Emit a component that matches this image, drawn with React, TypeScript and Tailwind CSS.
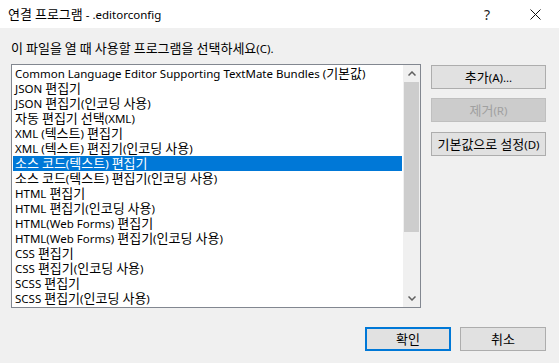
const items = [
  "Common Language Editor Supporting TextMate Bundles (기본값)",
  "JSON 편집기",
  "JSON 편집기(인코딩 사용)",
  "자동 편집기 선택(XML)",
  "XML (텍스트) 편집기",
  "XML (텍스트) 편집기(인코딩 사용)",
  "소스 코드(텍스트) 편집기",
  "소스 코드(텍스트) 편집기(인코딩 사용)",
  "HTML 편집기",
  "HTML 편집기(인코딩 사용)",
  "HTML(Web Forms) 편집기",
  "HTML(Web Forms) 편집기(인코딩 사용)",
  "CSS 편집기",
  "CSS 편집기(인코딩 사용)",
  "SCSS 편집기",
  "SCSS 편집기(인코딩 사용)",
];

const selected = 6;

// Hangul renders a bit wider than latin in the original dialog font
function K({ t }: { t: string }) {
  return (
    <>
      {t.split(/([\uac00-\ud7a3]+)/).map((part, i) =>
        /[\uac00-\ud7a3]/.test(part) ? (
          <span key={i} className="text-[13px] leading-[15px]">
            {part}
          </span>
        ) : (
          part
        )
      )}
    </>
  );
}

function SideButton({ label, disabled }: { label: string; disabled?: boolean }) {
  return (
    <button
      className={
        disabled
          ? "h-[24px] w-full border border-[#bfbfbf] bg-[#cccccc] leading-[15px] text-[#a0a0a0]"
          : "h-[24px] w-full border border-[#adadad] bg-[#e1e1e1] leading-[15px] text-black"
      }
    >
      <K t={label} />
    </button>
  );
}

export default function App() {
  return (
    <div className="flex h-[363px] w-[559px] flex-col bg-[#f0f0f0] font-['Noto_Sans','Noto_Sans_CJK_KR',sans-serif] text-[11.5px] text-black">
      {/* title bar */}
      <div className="flex h-[28px] items-center bg-white pl-[8px] leading-[15px]">
        <span>
          <K t="연결 프로그램 - .editorconfig" />
        </span>
        <span className="ml-auto mr-[40px] text-[14px] text-[#222]">?</span>
        <svg width="11" height="11" viewBox="0 0 11 11" className="mr-[18px]">
          <path d="M0.5 0.5 L10.5 10.5 M10.5 0.5 L0.5 10.5" stroke="#111" strokeWidth="1" />
        </svg>
      </div>

      <div className="flex flex-col pl-[11px] pr-[13px] pt-[13px]">
        <div className="h-[15px] whitespace-nowrap leading-[15px]">
          <K t="이 파일을 열 때 사용할 프로그램을 선택하세요(C)." />
        </div>

        <div className="mt-[8px] flex gap-[10px]">
          {/* listbox */}
          <div className="flex h-[244px] w-[410px] border border-[#828790] bg-white">
            <div className="flex-1 overflow-hidden p-[1px]">
              {items.map((it, i) => (
                <div
                  key={it}
                  className={
                    i === selected
                      ? "h-[15px] whitespace-nowrap bg-[#0078d7] pl-[2px] leading-[15px] text-white"
                      : "h-[15px] whitespace-nowrap pl-[2px] leading-[15px]"
                  }
                >
                  <K t={it} />
                </div>
              ))}
            </div>
            {/* scrollbar */}
            <div className="flex w-[17px] flex-col bg-[#f0f0f0]">
              <div className="flex h-[17px] items-center justify-center">
                <svg width="8" height="5" viewBox="0 0 8 5">
                  <path d="M0.5 4.5 L4 1 L7.5 4.5" fill="none" stroke="#606060" strokeWidth="1.5" />
                </svg>
              </div>
              <div className="mx-[1px] h-[150px] bg-[#cdcdcd]" />
              <div className="flex-1" />
              <div className="flex h-[17px] items-center justify-center">
                <svg width="8" height="5" viewBox="0 0 8 5">
                  <path d="M0.5 0.5 L4 4 L7.5 0.5" fill="none" stroke="#606060" strokeWidth="1.5" />
                </svg>
              </div>
            </div>
          </div>

          {/* side buttons */}
          <div className="mt-[1px] flex w-[115px] flex-col">
            <SideButton label="추가(A)..." />
            <div className="mt-[9px]">
              <SideButton label="제거(R)" disabled />
            </div>
            <div className="mt-[10px]">
              <SideButton label="기본값으로 설정(D)" />
            </div>
          </div>
        </div>

        <div className="mt-[19px] flex justify-end gap-[9px]">
          <button className="h-[24px] w-[86px] border-2 border-[#0078d7] bg-[#e1e1e1] leading-[15px]">
            <K t="확인" />
          </button>
          <button className="h-[24px] w-[86px] border border-[#adadad] bg-[#e1e1e1] leading-[15px]">
            <K t="취소" />
          </button>
        </div>
      </div>
    </div>
  );
}
